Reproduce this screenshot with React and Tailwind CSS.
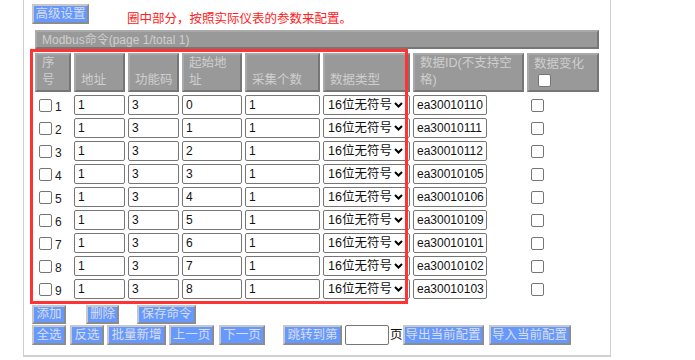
import React from 'react';

const rows = [
  ['0', 'ea30010110'],
  ['1', 'ea30010111'],
  ['2', 'ea30010112'],
  ['3', 'ea30010105'],
  ['4', 'ea30010106'],
  ['5', 'ea30010109'],
  ['6', 'ea30010101'],
  ['7', 'ea30010102'],
  ['8', 'ea30010103'],
];

function Btn({ children, className }) {
  return (
    <div
      className={`flex items-center justify-center bg-[#6699ff] text-[#dadde8] border-2 border-t-[#c8c8c8] border-l-[#c8c8c8] border-r-[#8c8c8c] border-b-[#8c8c8c] text-[12.5px] leading-none whitespace-nowrap ${className}`}
    >
      {children}
    </div>
  );
}

function Th({ className, children }) {
  return (
    <div
      className={`h-full bg-[#999999] border-2 border-t-[#a9a9a9] border-l-[#a9a9a9] border-r-[#767676] border-b-[#767676] flex flex-col justify-end pl-[5px] pb-[1px] text-[#cfcfcf] text-[12.5px] leading-[17px] ${className}`}
    >
      {children}
    </div>
  );
}

function Field({ className, value }) {
  return (
    <div
      className={`h-full border border-[#767676] rounded-[2px] bg-white flex items-center pl-[3px] text-[12px] text-[#111] ${className}`}
    >
      {value}
    </div>
  );
}

function Check({ className }) {
  return (
    <div
      className={`w-[13px] h-[13px] border border-[#767676] rounded-[2px] bg-white shrink-0 ${className}`}
    />
  );
}

function Chevron() {
  return (
    <svg width="9" height="6" viewBox="0 0 9 6" className="shrink-0">
      <path d="M1 1 L4.5 4.5 L8 1" fill="none" stroke="#000" strokeWidth="2" />
    </svg>
  );
}

export default function App() {
  return (
    <div className="relative w-[695px] h-[360px] bg-white overflow-hidden font-['Liberation_Sans','Noto_Sans_CJK_SC',sans-serif]">
      <div className="ml-[23px] w-[588px] h-[357px] border-l border-r border-b-2 border-[#d0d0d0] flex flex-col">
        {/* top row */}
        <div className="flex items-start h-[30px] shrink-0">
          <Btn className="ml-[8px] mt-[4px] w-[57px] h-[20px]">高级设置</Btn>
          <div className="ml-[38px] mt-[11px] text-[12.5px] leading-[17px] text-[#ff2020]">
            圈中部分，按照实际仪表的参数来配置。
          </div>
        </div>

        {/* gray title bar */}
        <div className="ml-[11px] w-[564px] h-[19px] shrink-0 bg-[#999999] border-2 border-t-[#a9a9a9] border-l-[#a9a9a9] border-r-[#767676] border-b-[#767676] flex items-center pl-[5px] text-[12px] text-[#cfcfcf] leading-none">
          Modbus命令(page 1/total 1)
        </div>

        {/* header */}
        <div className="ml-[11px] mt-[4px] h-[39px] shrink-0 flex gap-[3px]">
          <Th className="w-[36px]">序<br />号</Th>
          <Th className="w-[51px]">地址</Th>
          <Th className="w-[51px]">功能码</Th>
          <Th className="w-[60px]">起始地<br />址</Th>
          <Th className="w-[75px]">采集个数</Th>
          <Th className="w-[87px]">数据类型</Th>
          <Th className="w-[111px]">数据ID(不支持空<br />格)</Th>
          <Th className="w-[72px] justify-start pt-[1px]">
            <span>数据变化</span>
            <Check className="ml-[4px] mt-[1px] border-[#8a8a8a]" />
          </Th>
        </div>

        {/* data rows */}
        {rows.map((r, i) => (
          <div key={i} className="ml-[11px] mt-[3px] h-[20px] shrink-0 flex gap-[3px]">
            <div className="w-[36px] h-full flex items-center">
              <Check className="ml-[4px]" />
              <span className="ml-[3px] mt-[4px] text-[12px] leading-none text-[#1a1a2a]">{i + 1}</span>
            </div>
            <Field className="w-[51px]" value="1" />
            <Field className="w-[51px]" value="3" />
            <Field className="w-[60px]" value={r[0]} />
            <Field className="w-[75px]" value="1" />
            <div className="w-[87px] h-full border border-[#767676] rounded-[2px] bg-white flex items-center justify-between pl-[4px] pr-[6px] text-[12.5px] text-[#111]">
              <span>16位无符号</span>
              <Chevron />
            </div>
            <div className="w-[111px] h-full">
              <Field className="w-[74px]" value={r[1]} />
            </div>
            <div className="w-[72px] h-full flex items-center">
              <Check className="ml-[4px]" />
            </div>
          </div>
        ))}

        {/* button row 1 */}
        <div className="mt-[6px] h-[19px] shrink-0 flex">
          <Btn className="ml-[8px] w-[34px] h-full">添加</Btn>
          <Btn className="ml-[20px] w-[33px] h-full">删除</Btn>
          <Btn className="ml-[18px] w-[59px] h-full">保存命令</Btn>
        </div>

        {/* button row 2 */}
        <div className="mt-[1px] h-[20px] shrink-0 flex items-center">
          <Btn className="ml-[8px] w-[34px] h-full">全选</Btn>
          <Btn className="ml-[4px] w-[34px] h-full">反选</Btn>
          <Btn className="ml-[3px] w-[59px] h-full">批量新增</Btn>
          <Btn className="ml-[3px] w-[45px] h-full">上一页</Btn>
          <Btn className="ml-[5px] w-[46px] h-full">下一页</Btn>
          <Btn className="ml-[18px] w-[59px] h-full">跳转到第</Btn>
          <div className="ml-[3px] w-[44px] h-[20px] border border-[#767676] rounded-[2px] bg-white" />
          <span className="ml-[1px] text-[12.5px] leading-none text-[#111]">页</span>
          <Btn className="w-[81px] h-full">导出当前配置</Btn>
          <Btn className="ml-[5px] w-[82px] h-full">导入当前配置</Btn>
        </div>
      </div>

      {/* red annotation box */}
      <div className="absolute left-[30px] top-[49px] w-[378px] h-[255px] border-[3px] border-[#ff3333] pointer-events-none" />
    </div>
  );
}
